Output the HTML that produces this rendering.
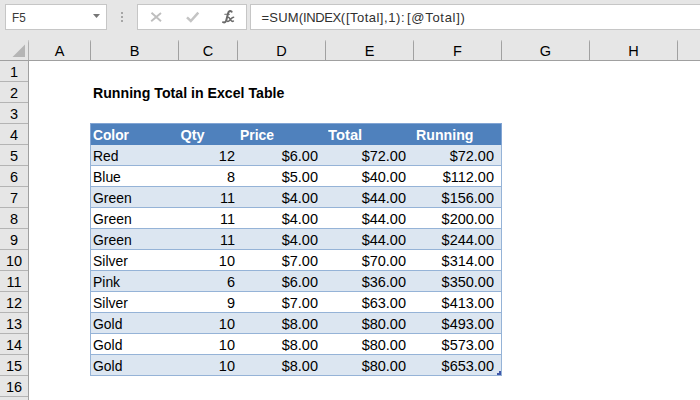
<!DOCTYPE html>
<html><head><meta charset="utf-8"><style>
*{margin:0;padding:0;box-sizing:border-box}
html,body{width:700px;height:400px;overflow:hidden;background:#fff}
body{position:relative;font-family:"Liberation Sans",sans-serif;color:#000}
.a{position:absolute}
.t{position:absolute;white-space:nowrap;line-height:16px;height:16px}
.r{text-align:right}
.c{text-align:center}
</style></head><body>

<div class="a" style="left:0;top:0;width:700px;height:61px;background:#e6e6e6"></div>
<div class="a" style="left:0;top:0;width:28px;height:400px;background:#e6e6e6"></div>
<div class="a" style="left:5px;top:4px;width:102px;height:26px;background:#fff;border:1px solid #c6c6c6"></div>
<div class="t" style="left:12px;top:10px;font-size:13px;color:#383838;transform:scaleX(0.9);transform-origin:0 0">F5</div>
<svg class="a" style="left:92px;top:13px" width="10" height="7"><path d="M1 1H8L4.5 5Z" fill="#767676"/></svg>
<div class="a" style="left:121px;top:12px;width:2px;height:2px;background:#a6a6a6"></div>
<div class="a" style="left:121px;top:16px;width:2px;height:2px;background:#a6a6a6"></div>
<div class="a" style="left:121px;top:20px;width:2px;height:2px;background:#a6a6a6"></div>
<div class="a" style="left:137px;top:4px;width:110px;height:26px;background:#fff;border:1px solid #c6c6c6"></div>
<svg class="a" style="left:148px;top:10px" width="16" height="14"><path d="M3.5 2.8L13 11.2M13 3L3.2 11.2" stroke="#bebebe" stroke-width="1.9" fill="none"/></svg>
<svg class="a" style="left:184px;top:10px" width="18" height="14"><path d="M3 7.4L6.8 11L14.3 2.6" stroke="#c4c4c4" stroke-width="2.5" fill="none"/></svg>
<svg class="a" style="left:218px;top:6px" width="22" height="22"><g fill="none" stroke="#6a6a6a" stroke-linecap="round"><path d="M13.6 5.6C12 4.6 10.6 5.2 10.1 7.2L8.3 14.2C7.8 16.2 6.6 16.9 5 16.2" stroke-width="2"/><path d="M6.8 8.3H11.4" stroke-width="1.1"/><path d="M9.6 11.3C10.6 11 11.3 11.6 12 12.8L13.2 14.6C13.8 15.5 14.5 15.6 15.4 15.1M15.6 11.2C14.6 11.2 13.7 12 12.6 13.3L11.5 14.6C10.8 15.4 10.2 15.5 9.4 15.3" stroke-width="1.5"/></g></svg>
<div class="a" style="left:250px;top:4px;width:460px;height:26px;background:#fff;border:1px solid #c6c6c6"></div>
<div class="t" style="left:261.5px;top:10px;font-size:13px;color:#303030;letter-spacing:0.2px">=SUM(</div>
<div class="t" style="left:303px;top:10px;font-size:13px;color:#303030;letter-spacing:-0.4px">INDEX(</div>
<div class="t" style="left:346px;top:10px;font-size:13px;color:#303030;letter-spacing:0.45px">[Total]</div>
<div class="t" style="left:384px;top:10px;font-size:13px;color:#303030;letter-spacing:0.6px">,1):</div>
<div class="t" style="left:407px;top:10px;font-size:13px;color:#303030;letter-spacing:0.7px">[@Total])</div>
<div class="a" style="left:90px;top:40px;width:1px;height:20px;background:linear-gradient(#cfcfcf,#a2a2a2 2px,#a0a0a0)"></div>
<div class="a" style="left:178px;top:40px;width:1px;height:20px;background:linear-gradient(#cfcfcf,#a2a2a2 2px,#a0a0a0)"></div>
<div class="a" style="left:237px;top:40px;width:1px;height:20px;background:linear-gradient(#cfcfcf,#a2a2a2 2px,#a0a0a0)"></div>
<div class="a" style="left:325px;top:40px;width:1px;height:20px;background:linear-gradient(#cfcfcf,#a2a2a2 2px,#a0a0a0)"></div>
<div class="a" style="left:413px;top:40px;width:1px;height:20px;background:linear-gradient(#cfcfcf,#a2a2a2 2px,#a0a0a0)"></div>
<div class="a" style="left:501px;top:40px;width:1px;height:20px;background:linear-gradient(#cfcfcf,#a2a2a2 2px,#a0a0a0)"></div>
<div class="a" style="left:589px;top:40px;width:1px;height:20px;background:linear-gradient(#cfcfcf,#a2a2a2 2px,#a0a0a0)"></div>
<div class="a" style="left:677px;top:40px;width:1px;height:20px;background:linear-gradient(#cfcfcf,#a2a2a2 2px,#a0a0a0)"></div>
<div class="a" style="left:0;top:60px;width:700px;height:1px;background:#a0a0a0"></div>
<div class="a" style="left:28px;top:40px;width:1px;height:20px;background:linear-gradient(#d0d0d0,#b0b0b0 3px,#b0b0b0)"></div>
<div class="a" style="left:28px;top:60px;width:1px;height:340px;background:#a0a0a0"></div>
<svg class="a" style="left:0;top:40px" width="28" height="20"><path d="M12.5 17H25V4.5Z" fill="#b5b5b5"/></svg>
<div class="t c" style="left:29px;width:61px;top:43px;font-size:14.5px">A</div>
<div class="t c" style="left:91px;width:87px;top:43px;font-size:14.5px">B</div>
<div class="t c" style="left:179px;width:58px;top:43px;font-size:14.5px">C</div>
<div class="t c" style="left:238px;width:87px;top:43px;font-size:14.5px">D</div>
<div class="t c" style="left:326px;width:87px;top:43px;font-size:14.5px">E</div>
<div class="t c" style="left:414px;width:87px;top:43px;font-size:14.5px">F</div>
<div class="t c" style="left:502px;width:87px;top:43px;font-size:14.5px">G</div>
<div class="t c" style="left:590px;width:87px;top:43px;font-size:14.5px">H</div>
<div class="a" style="left:0;top:81px;width:28px;height:1px;background:#b4b4b4"></div>
<div class="t c" style="left:0;width:28px;top:64px;font-size:14.5px">1</div>
<div class="a" style="left:0;top:102px;width:28px;height:1px;background:#b4b4b4"></div>
<div class="t c" style="left:0;width:28px;top:85px;font-size:14.5px">2</div>
<div class="a" style="left:0;top:123px;width:28px;height:1px;background:#b4b4b4"></div>
<div class="t c" style="left:0;width:28px;top:106px;font-size:14.5px">3</div>
<div class="a" style="left:0;top:144px;width:28px;height:1px;background:#b4b4b4"></div>
<div class="t c" style="left:0;width:28px;top:127px;font-size:14.5px">4</div>
<div class="a" style="left:0;top:165px;width:28px;height:1px;background:#b4b4b4"></div>
<div class="t c" style="left:0;width:28px;top:148px;font-size:14.5px">5</div>
<div class="a" style="left:0;top:186px;width:28px;height:1px;background:#b4b4b4"></div>
<div class="t c" style="left:0;width:28px;top:169px;font-size:14.5px">6</div>
<div class="a" style="left:0;top:207px;width:28px;height:1px;background:#b4b4b4"></div>
<div class="t c" style="left:0;width:28px;top:190px;font-size:14.5px">7</div>
<div class="a" style="left:0;top:228px;width:28px;height:1px;background:#b4b4b4"></div>
<div class="t c" style="left:0;width:28px;top:211px;font-size:14.5px">8</div>
<div class="a" style="left:0;top:249px;width:28px;height:1px;background:#b4b4b4"></div>
<div class="t c" style="left:0;width:28px;top:232px;font-size:14.5px">9</div>
<div class="a" style="left:0;top:270px;width:28px;height:1px;background:#b4b4b4"></div>
<div class="t c" style="left:0;width:28px;top:253px;font-size:14.5px">10</div>
<div class="a" style="left:0;top:291px;width:28px;height:1px;background:#b4b4b4"></div>
<div class="t c" style="left:0;width:28px;top:274px;font-size:14.5px">11</div>
<div class="a" style="left:0;top:312px;width:28px;height:1px;background:#b4b4b4"></div>
<div class="t c" style="left:0;width:28px;top:295px;font-size:14.5px">12</div>
<div class="a" style="left:0;top:333px;width:28px;height:1px;background:#b4b4b4"></div>
<div class="t c" style="left:0;width:28px;top:316px;font-size:14.5px">13</div>
<div class="a" style="left:0;top:354px;width:28px;height:1px;background:#b4b4b4"></div>
<div class="t c" style="left:0;width:28px;top:337px;font-size:14.5px">14</div>
<div class="a" style="left:0;top:375px;width:28px;height:1px;background:#b4b4b4"></div>
<div class="t c" style="left:0;width:28px;top:358px;font-size:14.5px">15</div>
<div class="a" style="left:0;top:396px;width:28px;height:1px;background:#b4b4b4"></div>
<div class="t c" style="left:0;width:28px;top:379px;font-size:14.5px">16</div>
<div class="t" style="left:93px;top:85px;font-size:14.5px;font-weight:bold;transform:scaleX(0.976);transform-origin:0 0">Running Total in Excel Table</div>
<div class="a" style="left:90px;top:123px;width:412px;height:22px;background:#4f81bd;border:1px solid #82a5d4;border-bottom:0"></div>
<div class="a" style="left:90px;top:145px;width:412px;height:20px;background:#dce6f1"></div>
<div class="a" style="left:90px;top:165px;width:412px;height:1px;background:#95b3d7"></div>
<div class="a" style="left:90px;top:166px;width:412px;height:20px;background:#ffffff"></div>
<div class="a" style="left:90px;top:186px;width:412px;height:1px;background:#95b3d7"></div>
<div class="a" style="left:90px;top:187px;width:412px;height:20px;background:#dce6f1"></div>
<div class="a" style="left:90px;top:207px;width:412px;height:1px;background:#95b3d7"></div>
<div class="a" style="left:90px;top:208px;width:412px;height:20px;background:#ffffff"></div>
<div class="a" style="left:90px;top:228px;width:412px;height:1px;background:#95b3d7"></div>
<div class="a" style="left:90px;top:229px;width:412px;height:20px;background:#dce6f1"></div>
<div class="a" style="left:90px;top:249px;width:412px;height:1px;background:#95b3d7"></div>
<div class="a" style="left:90px;top:250px;width:412px;height:20px;background:#ffffff"></div>
<div class="a" style="left:90px;top:270px;width:412px;height:1px;background:#95b3d7"></div>
<div class="a" style="left:90px;top:271px;width:412px;height:20px;background:#dce6f1"></div>
<div class="a" style="left:90px;top:291px;width:412px;height:1px;background:#95b3d7"></div>
<div class="a" style="left:90px;top:292px;width:412px;height:20px;background:#ffffff"></div>
<div class="a" style="left:90px;top:312px;width:412px;height:1px;background:#95b3d7"></div>
<div class="a" style="left:90px;top:313px;width:412px;height:20px;background:#dce6f1"></div>
<div class="a" style="left:90px;top:333px;width:412px;height:1px;background:#95b3d7"></div>
<div class="a" style="left:90px;top:334px;width:412px;height:20px;background:#ffffff"></div>
<div class="a" style="left:90px;top:354px;width:412px;height:1px;background:#95b3d7"></div>
<div class="a" style="left:90px;top:355px;width:412px;height:20px;background:#dce6f1"></div>
<div class="a" style="left:90px;top:375px;width:412px;height:1px;background:#95b3d7"></div>
<div class="a" style="left:90px;top:145px;width:1px;height:231px;background:#95b3d7"></div>
<div class="a" style="left:501px;top:145px;width:1px;height:231px;background:#95b3d7"></div>
<div class="a" style="left:499px;top:371px;width:2px;height:4px;background:#3f56a8"></div><div class="a" style="left:497px;top:373px;width:2px;height:2px;background:#3f56a8"></div>
<div class="t" style="left:92.6px;top:127px;font-size:14.5px;font-weight:bold;color:#fff;transform:scaleX(0.95);transform-origin:0 0">Color</div>
<div class="t" style="left:180.5px;top:127px;font-size:14.5px;font-weight:bold;color:#fff;transform:scaleX(1.0);transform-origin:0 0">Qty</div>
<div class="t" style="left:240px;top:127px;font-size:14.5px;font-weight:bold;color:#fff;transform:scaleX(0.96);transform-origin:0 0">Price</div>
<div class="t" style="left:328.3px;top:127px;font-size:14.5px;font-weight:bold;color:#fff;transform:scaleX(1.02);transform-origin:0 0">Total</div>
<div class="t" style="left:416px;top:127px;font-size:14.5px;font-weight:bold;color:#fff;transform:scaleX(0.977);transform-origin:0 0">Running</div>
<div class="t" style="left:92.8px;top:148px;font-size:14.5px;transform:scaleX(0.96);transform-origin:0 0">Red</div>
<div class="t r" style="left:135px;width:100px;top:148px;font-size:14.5px">12</div>
<div class="t r" style="left:218px;width:100px;top:148px;font-size:14.5px">$6.00</div>
<div class="t r" style="left:306px;width:100px;top:148px;font-size:14.5px">$72.00</div>
<div class="t r" style="left:394px;width:100px;top:148px;font-size:14.5px">$72.00</div>
<div class="t" style="left:92.8px;top:169px;font-size:14.5px;transform:scaleX(0.96);transform-origin:0 0">Blue</div>
<div class="t r" style="left:135px;width:100px;top:169px;font-size:14.5px">8</div>
<div class="t r" style="left:218px;width:100px;top:169px;font-size:14.5px">$5.00</div>
<div class="t r" style="left:306px;width:100px;top:169px;font-size:14.5px">$40.00</div>
<div class="t r" style="left:394px;width:100px;top:169px;font-size:14.5px">$112.00</div>
<div class="t" style="left:92.8px;top:190px;font-size:14.5px;transform:scaleX(0.96);transform-origin:0 0">Green</div>
<div class="t r" style="left:135px;width:100px;top:190px;font-size:14.5px">11</div>
<div class="t r" style="left:218px;width:100px;top:190px;font-size:14.5px">$4.00</div>
<div class="t r" style="left:306px;width:100px;top:190px;font-size:14.5px">$44.00</div>
<div class="t r" style="left:394px;width:100px;top:190px;font-size:14.5px">$156.00</div>
<div class="t" style="left:92.8px;top:211px;font-size:14.5px;transform:scaleX(0.96);transform-origin:0 0">Green</div>
<div class="t r" style="left:135px;width:100px;top:211px;font-size:14.5px">11</div>
<div class="t r" style="left:218px;width:100px;top:211px;font-size:14.5px">$4.00</div>
<div class="t r" style="left:306px;width:100px;top:211px;font-size:14.5px">$44.00</div>
<div class="t r" style="left:394px;width:100px;top:211px;font-size:14.5px">$200.00</div>
<div class="t" style="left:92.8px;top:232px;font-size:14.5px;transform:scaleX(0.96);transform-origin:0 0">Green</div>
<div class="t r" style="left:135px;width:100px;top:232px;font-size:14.5px">11</div>
<div class="t r" style="left:218px;width:100px;top:232px;font-size:14.5px">$4.00</div>
<div class="t r" style="left:306px;width:100px;top:232px;font-size:14.5px">$44.00</div>
<div class="t r" style="left:394px;width:100px;top:232px;font-size:14.5px">$244.00</div>
<div class="t" style="left:92.8px;top:253px;font-size:14.5px;transform:scaleX(0.96);transform-origin:0 0">Silver</div>
<div class="t r" style="left:135px;width:100px;top:253px;font-size:14.5px">10</div>
<div class="t r" style="left:218px;width:100px;top:253px;font-size:14.5px">$7.00</div>
<div class="t r" style="left:306px;width:100px;top:253px;font-size:14.5px">$70.00</div>
<div class="t r" style="left:394px;width:100px;top:253px;font-size:14.5px">$314.00</div>
<div class="t" style="left:92.8px;top:274px;font-size:14.5px;transform:scaleX(0.96);transform-origin:0 0">Pink</div>
<div class="t r" style="left:135px;width:100px;top:274px;font-size:14.5px">6</div>
<div class="t r" style="left:218px;width:100px;top:274px;font-size:14.5px">$6.00</div>
<div class="t r" style="left:306px;width:100px;top:274px;font-size:14.5px">$36.00</div>
<div class="t r" style="left:394px;width:100px;top:274px;font-size:14.5px">$350.00</div>
<div class="t" style="left:92.8px;top:295px;font-size:14.5px;transform:scaleX(0.96);transform-origin:0 0">Silver</div>
<div class="t r" style="left:135px;width:100px;top:295px;font-size:14.5px">9</div>
<div class="t r" style="left:218px;width:100px;top:295px;font-size:14.5px">$7.00</div>
<div class="t r" style="left:306px;width:100px;top:295px;font-size:14.5px">$63.00</div>
<div class="t r" style="left:394px;width:100px;top:295px;font-size:14.5px">$413.00</div>
<div class="t" style="left:92.8px;top:316px;font-size:14.5px;transform:scaleX(0.96);transform-origin:0 0">Gold</div>
<div class="t r" style="left:135px;width:100px;top:316px;font-size:14.5px">10</div>
<div class="t r" style="left:218px;width:100px;top:316px;font-size:14.5px">$8.00</div>
<div class="t r" style="left:306px;width:100px;top:316px;font-size:14.5px">$80.00</div>
<div class="t r" style="left:394px;width:100px;top:316px;font-size:14.5px">$493.00</div>
<div class="t" style="left:92.8px;top:337px;font-size:14.5px;transform:scaleX(0.96);transform-origin:0 0">Gold</div>
<div class="t r" style="left:135px;width:100px;top:337px;font-size:14.5px">10</div>
<div class="t r" style="left:218px;width:100px;top:337px;font-size:14.5px">$8.00</div>
<div class="t r" style="left:306px;width:100px;top:337px;font-size:14.5px">$80.00</div>
<div class="t r" style="left:394px;width:100px;top:337px;font-size:14.5px">$573.00</div>
<div class="t" style="left:92.8px;top:358px;font-size:14.5px;transform:scaleX(0.96);transform-origin:0 0">Gold</div>
<div class="t r" style="left:135px;width:100px;top:358px;font-size:14.5px">10</div>
<div class="t r" style="left:218px;width:100px;top:358px;font-size:14.5px">$8.00</div>
<div class="t r" style="left:306px;width:100px;top:358px;font-size:14.5px">$80.00</div>
<div class="t r" style="left:394px;width:100px;top:358px;font-size:14.5px">$653.00</div>
</body></html>
